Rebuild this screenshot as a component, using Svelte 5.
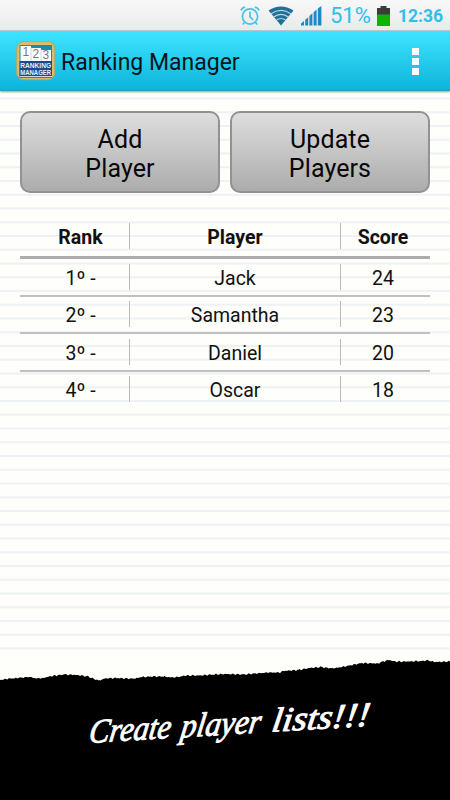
<script>
  let players = [
    { name: "Jack", score: 24 },
    { name: "Samantha", score: 23 },
    { name: "Daniel", score: 20 },
    { name: "Oscar", score: 18 },
  ];

  // outline of the torn paper, x then y
  const edge = [
    [0, 21], [10, 19.5], [17, 19], [22, 18.5], [30, 18], [36, 19.5],
    [43, 19], [52, 17], [65, 15.5], [77, 16], [88, 17.5], [94, 20],
    [99, 21.5], [105, 19.5], [118, 19], [127, 19.5], [135, 19.5], [142, 18],
    [152, 17.5], [163, 17.5], [172, 18.5], [179, 18], [185, 16.5], [200, 16.5],
    [213, 15.5], [225, 15], [244, 15.5], [255, 14.5], [268, 13.5], [280, 13.5],
    [284, 12], [298, 11], [310, 9], [321, 8], [332, 9.5], [342, 8],
    [352, 6], [362, 4], [378, 4.5], [383, 2.5], [389, 1], [395, 2.5],
    [407, 2.5], [420, 2], [428, 1.5], [435, 3], [450, 2.5],
  ];

  let torn = "M0 141";
  for (let i = 0; i < edge.length - 1; i++) {
    const [x1, y1] = edge[i];
    const [x2, y2] = edge[i + 1];
    for (let x = x1; x < x2; x += 1.5) {
      const rough = Math.sin(x * 2.7) * 0.45 + Math.sin(x * 1.13) * 0.4;
      const y = y1 + ((y2 - y1) * (x - x1)) / (x2 - x1) + rough;
      torn += ` L${x} ${y.toFixed(1)}`;
    }
  }
  torn += " L450 2.5 L450 141 Z";
</script>

<div class="screen">
  <div class="status">
    <svg class="alarm" width="22" height="22" viewBox="0 0 22 22">
      <circle cx="11" cy="11.5" r="7.6" />
      <path d="M11 6.5v5.3l3.2 3.2M2 5.6a5 5 0 0 1 4.2-3.4M20 5.6a5 5 0 0 0-4.2-3.4M5.5 17.5l-1.8 2M16.5 17.5l1.8 2" />
    </svg>
    <svg class="wifi" width="26" height="20" viewBox="0 0 26 20">
      <path class="fan" d="M.5 4.5Q13-3.5 25.5 4.5L13 19.5Z" />
      <path class="arc" d="M2.7 8Q13 .8 23.3 8M5.3 11.2Q13 5.6 20.7 11.2M8 14.4Q13 10.7 18 14.4" />
    </svg>
    <svg class="signal" width="21" height="20" viewBox="0 0 21 20">
      <path d="M0 19.5v-2l3-2.6v4.6zM4.2 19.5v-5.7l3-2.6v8.3zM8.4 19.5V10l3-2.7v12.2zM12.6 19.5V6.2l3-2.7v16zM16.8 19.5V2.5L20.4 0v19.5z" />
    </svg>
    <span class="percent">51%</span>
    <svg class="battery" width="13" height="20" viewBox="0 0 13 20">
      <path fill="#3c3c3c" d="M3.5 0h6v2H13v7H0V2h3.5z" />
      <path fill="#0fb400" d="M0 8.5h13V20H0z" />
    </svg>
    <span class="time">12:36</span>
  </div>

  <header>
    <svg class="logo" width="40" height="40" viewBox="0 0 40 40">
      <rect x=".7" y=".7" width="38" height="38" rx="7" fill="#d9bd70" stroke="#b2a868" />
      <rect x="3.5" y="4" width="32.5" height="32.5" fill="#168fae" />
      <path fill="#fff" d="M4.5 5H15v2h10v2h10v11H4.5z" />
      <path stroke="#b9c3c8" stroke-width=".7" d="M15 6v14M25 8v12" />
      <rect x="3.5" y="20" width="32.5" height="16.5" fill="#1a4a8a" />
      <rect x="3.5" y="35" width="32.5" height="1" fill="#c9dbe5" />
      <g class="nums">
        <text x="6.5" y="14.5">1</text>
        <text x="16.5" y="16.5">2</text>
        <text x="26.5" y="18">3</text>
      </g>
      <g class="words">
        <text x="4.2" y="26.8" textLength="31" lengthAdjust="spacingAndGlyphs">RANKING</text>
        <text x="4.2" y="34" textLength="31" lengthAdjust="spacingAndGlyphs">MANAGER</text>
      </g>
    </svg>
    <h1>Ranking Manager</h1>
    <div class="menu"><i></i><i></i><i></i></div>
  </header>

  <main>
    <div class="buttons">
      <button>Add<br />Player</button>
      <button>Update<br />Players</button>
    </div>

    <div class="table">
      <div class="row head">
        <span class="rank">Rank</span>
        <span class="player">Player</span>
        <span class="score">Score</span>
      </div>
      {#each players as player, i}
        <div class="row">
          <span class="rank">{i + 1}º -</span>
          <span class="player">{player.name}</span>
          <span class="score">{player.score}</span>
        </div>
      {/each}
    </div>
  </main>

  <svg class="banner" width="450" height="141" viewBox="0 0 450 141">
    <path d={torn} />
    <g transform="translate(88 84) rotate(-3.5) skewX(-12)">
      <text x="0" y="0" textLength="82" lengthAdjust="spacingAndGlyphs">Create</text>
      <text x="92" y="0" textLength="80" lengthAdjust="spacingAndGlyphs">player</text>
      <text x="183" y="0" textLength="98" lengthAdjust="spacingAndGlyphs">lists!!!</text>
    </g>
  </svg>
</div>

<style>
  :global(body) {
    margin: 0;
  }

  .screen {
    width: 450px;
    height: 800px;
    overflow: hidden;
    display: flex;
    flex-direction: column;
    font-family: Roboto, sans-serif;
    color: #111;
    background-color: #fefefa;
  }

  .status {
    box-sizing: border-box;
    height: 31px;
    display: flex;
    align-items: center;
    justify-content: flex-end;
    padding: 1px 7px 0 0;
    color: #2cc0ea;
    background: linear-gradient(#f8f8f8, #eaeaea);
    border-bottom: 1px solid #b8cccf;
  }
  .alarm {
    fill: none;
    stroke: #46c4e8;
    stroke-width: 1.7;
    margin-right: 7px;
  }
  .wifi {
    margin-right: 7px;
  }
  .fan {
    fill: #236f94;
  }
  .arc {
    fill: none;
    stroke: #b7d8e3;
    stroke-width: 1.1;
  }
  .signal {
    fill: #2089c4;
    margin-right: 8px;
  }
  .percent {
    width: 40px;
    font-size: 22px;
    margin-right: 7px;
    white-space: nowrap;
  }
  .battery {
    margin-right: 8px;
  }
  .time {
    width: 45px;
    font-size: 17.5px;
    font-weight: 700;
    white-space: nowrap;
  }

  header {
    box-sizing: border-box;
    height: 60px;
    flex-shrink: 0;
    position: relative;
    display: flex;
    align-items: center;
    padding: 0 31px 0 16px;
    background: linear-gradient(#3fe4ff, #0cb4da);
    border-bottom: 1px solid #2c9db5;
    box-shadow: 0 1px 2px #999;
  }
  .nums {
    font: 12px "Liberation Sans", sans-serif;
    fill: #777;
  }
  .words {
    font: bold 6.3px "Liberation Sans", sans-serif;
    fill: #e4f0fa;
  }
  h1 {
    flex: 1;
    margin: 4px 0 0 5px;
    font-size: 23px;
    font-weight: 400;
    color: #06161a;
  }
  .menu {
    display: grid;
    gap: 3px;
    padding-top: 1px;
  }
  .menu i {
    width: 7px;
    height: 7px;
    background: #fff;
  }

  main {
    flex: 1;
    padding: 20px 20px 0;
    background: repeating-linear-gradient(
        #fefefa 0,
        #fefefa 6px,
        #eef1f5 7px,
        #eef1f5 8px,
        #fefefa 9px,
        #fefefa 13.75px
      );
  }
  .buttons {
    display: flex;
    gap: 10px;
  }
  button {
    box-sizing: border-box;
    width: 200px;
    height: 82px;
    padding: 3px 0 0;
    border: 2px solid #929292;
    border-radius: 10px;
    background: linear-gradient(#dedede, #acacac);
    font: 25px/29px Roboto, sans-serif;
    letter-spacing: 0.1px;
    color: #080808;
  }

  .table {
    margin-top: 23px;
  }
  .row {
    box-sizing: border-box;
    height: 37.5px;
    display: flex;
    align-items: center;
    border-bottom: 2px solid #c0c0c0;
    font-size: 19.5px;
    line-height: 29px;
    text-align: center;
  }
  .row:last-child {
    border: none;
    padding-bottom: 2px;
  }
  .row span {
    box-sizing: border-box;
    height: 26px;
  }
  .head {
    height: 43px;
    border-bottom: 3px solid #adadad;
    font-weight: 700;
  }
  .rank {
    width: 110px;
    padding-left: 12px;
    border-right: 1px solid #bbb;
  }
  .player {
    width: 211px;
    border-right: 1px solid #bbb;
  }
  .score {
    width: 84px;
  }

  .banner {
    display: block;
    height: 141px;
    flex-shrink: 0;
    background: #fefefa;
  }
  .banner text {
    font: italic 34px "Brush Script MT", "Liberation Serif", serif;
    fill: #fff;
    stroke: #fff;
    stroke-width: 0.9;
    stroke-linejoin: round;
  }
</style>
